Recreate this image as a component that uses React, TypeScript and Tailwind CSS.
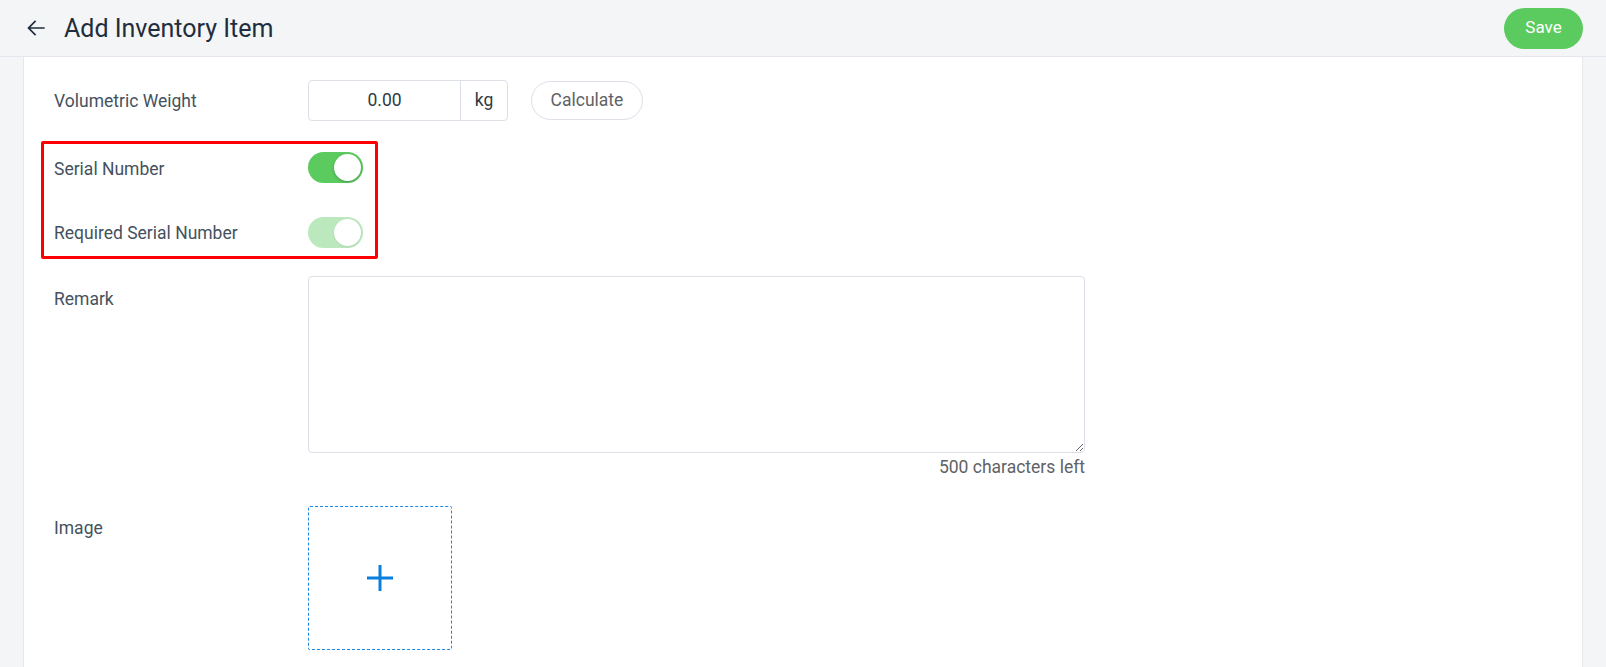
import React from "react";

function Toggle({ disabled }: { disabled?: boolean }) {
  return (
    <div
      className={`relative h-[31px] w-[55px] rounded-full ${
        disabled ? "bg-[#bce8be]" : "bg-[#5ccb5f]"
      }`}
    >
      <div
        className={`absolute right-[2px] top-[2px] h-[27px] w-[27px] rounded-full bg-white ${
          disabled ? "shadow-[0_1px_2px_rgba(0,0,0,0.08)]" : "shadow-[0_1px_3px_rgba(0,0,0,0.25)]"
        }`}
      />
    </div>
  );
}

export default function App() {
  return (
    <div
      className="flex h-[667px] w-full flex-col overflow-hidden bg-[#f4f5f7]"
      style={{ fontFamily: "Roboto, 'Liberation Sans', sans-serif" }}
    >
      {/* Header */}
      <div className="flex h-[57px] shrink-0 items-center border-b border-[#e4e7ed] pl-[23px] pr-[23px]">
        <svg width="26" height="26" viewBox="0 0 24 24" className="text-[#1f2d3d]">
          <path
            fill="currentColor"
            d="M20 11.2H6.9l5.3-5.3-1.1-1.1L4 12l7.1 7.2 1.1-1.1-5.3-5.3H20v-1.6z"
          />
        </svg>
        <div className="ml-[15px] text-[25px] leading-none text-[#1f2d3d]">Add Inventory Item</div>
        <div className="flex-1" />
        <button className="h-[41px] w-[79px] rounded-full bg-[#5ccb5f] text-[17px] text-white">
          Save
        </button>
      </div>

      {/* Panel */}
      <div className="relative mx-[23px] flex-1 border-x border-[#e6e8eb] bg-white pl-[30px] pt-[23px]">
        {/* Volumetric Weight */}
        <div className="flex h-[41px] items-center">
          <div className="w-[254px] pt-[2px] text-[17.5px] text-[#45525e]">Volumetric Weight</div>
          <div className="flex h-[41px] w-[200px] rounded-[4px] border border-[#dcdfe6]">
            <div className="flex flex-1 items-center justify-center text-[17.5px] text-[#303a45]">0.00</div>
            <div className="flex w-[47px] items-center justify-center border-l border-[#dcdfe6] text-[17.5px] text-[#303a45]">
              kg
            </div>
          </div>
          <button className="ml-[23px] h-[39px] w-[112px] rounded-full border border-[#dcdfe6] text-[17.5px] text-[#606266]">
            Calculate
          </button>
        </div>

        {/* Serial Number */}
        <div className="mt-[31px] flex h-[31px] items-center">
          <div className="w-[254px] pt-[3px] text-[17.5px] text-[#45525e]">Serial Number</div>
          <Toggle />
        </div>

        {/* Required Serial Number */}
        <div className="mt-[34px] flex h-[31px] items-center">
          <div className="w-[254px] pt-[2px] text-[17.5px] text-[#45525e]">Required Serial Number</div>
          <Toggle disabled />
        </div>

        {/* Remark */}
        <div className="mt-[28px] flex">
          <div className="w-[254px] pt-[11px] text-[17.5px] leading-6 text-[#45525e]">Remark</div>
          <div className="flex w-[777px] flex-col">
            <textarea className="h-[177px] w-full rounded-[4px] border border-[#dcdfe6] outline-none" />
            <div className="mt-[4px] text-right text-[17.5px] leading-5 text-[#606266]">500 characters left</div>
          </div>
        </div>

        {/* Image */}
        <div className="mt-[29px] flex">
          <div className="w-[254px] pt-[10px] text-[17.5px] leading-6 text-[#45525e]">Image</div>
          <div className="flex h-[144px] w-[144px] items-center justify-center rounded-[2px] border border-dashed border-[#1a86e8]">
            <svg width="28" height="28" viewBox="0 0 28 28">
              <path d="M14 1v26M1 14h26" stroke="#0a7fe0" strokeWidth="3" />
            </svg>
          </div>
        </div>

        {/* Annotation box */}
        <div className="absolute left-[17px] top-[84px] h-[118px] w-[337px] rounded-[2px] border-[3px] border-[#ff0000]" />
      </div>
    </div>
  );
}
